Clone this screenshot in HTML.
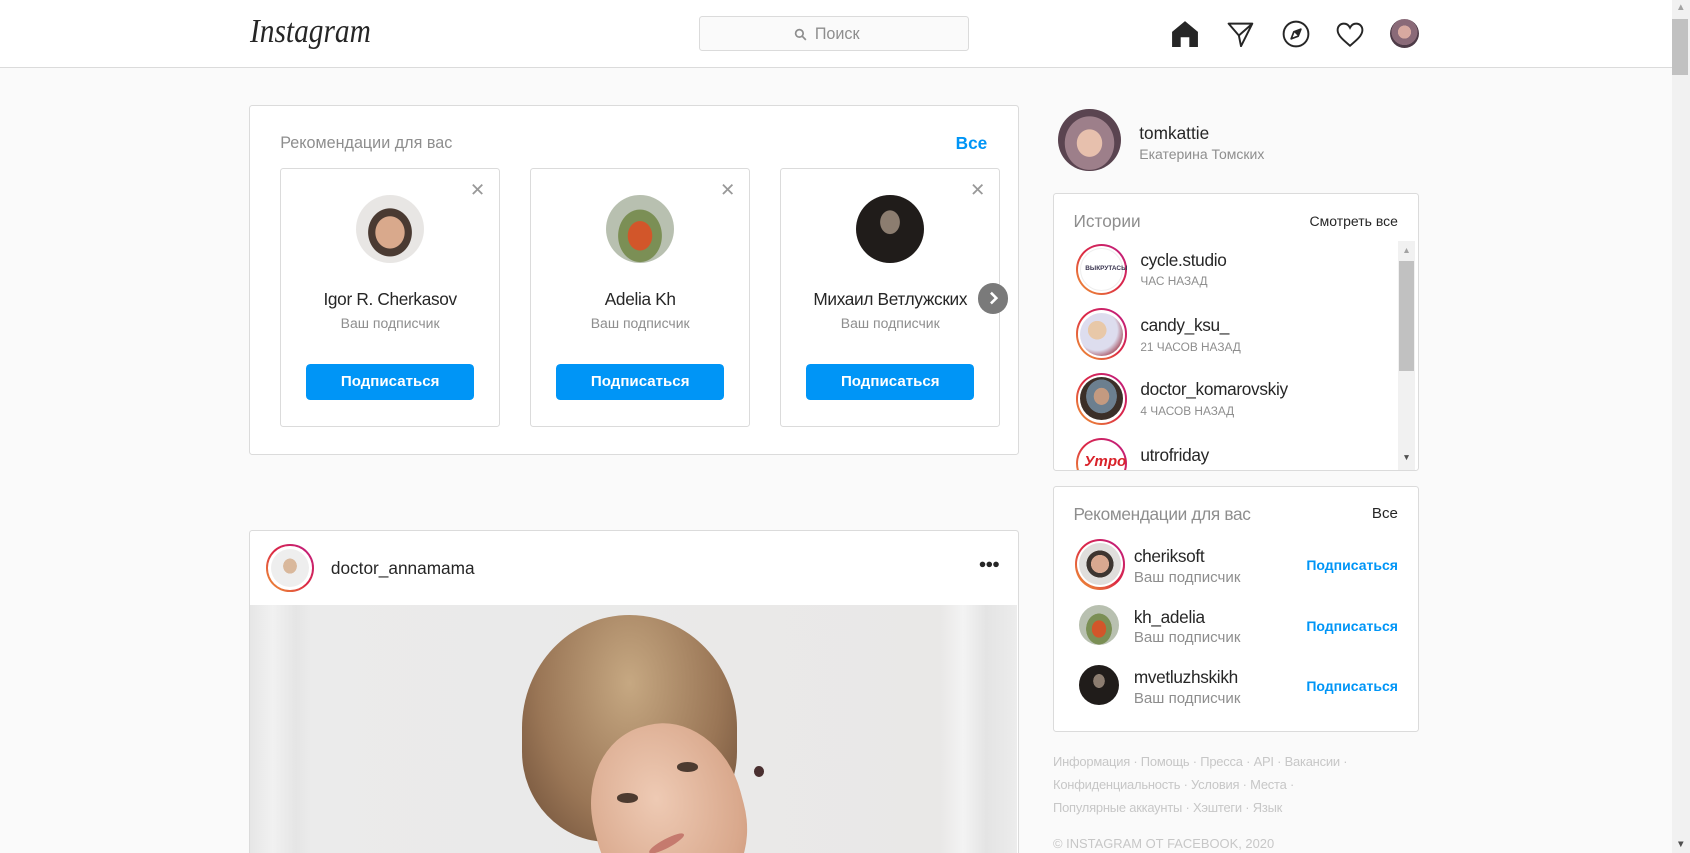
<!DOCTYPE html>
<html><head><meta charset="utf-8">
<style>
html,body{margin:0;padding:0;overflow:hidden}
body{width:1690px;height:853px;background:#fafafa;font-family:"Liberation Sans","DejaVu Sans",sans-serif;color:#262626}
#w{position:relative;width:1568px;height:791px;zoom:1.07781;overflow:hidden}
.a{position:absolute}
.box{position:absolute;background:#fff;border:1px solid #dbdbdb;border-radius:3px;box-sizing:border-box}
.av{position:absolute;border-radius:50%;overflow:hidden}
.ring{position:absolute;border-radius:50%;background:linear-gradient(45deg,#f09433,#e6683c,#dc2743,#cc2366,#bc1888)}
.ring>div{position:absolute;inset:2px;border-radius:50%;background:#fff}
.ring>div>div{position:absolute;inset:2px;border-radius:50%}
.btn{position:absolute;background:#0095f6;color:#fff;font-weight:bold;font-size:14px;text-align:center;line-height:33px;border-radius:4px;width:156px;height:33px}
.t{position:absolute;white-space:nowrap}
.r{position:absolute;white-space:nowrap;text-align:right}
.g{color:#8e8e8e}
</style></head><body><div id="w">
<!-- header -->
<div class="a" style="left:0;top:0;width:1551px;height:62px;background:#fff;border-bottom:1px solid #dbdbdb"></div>
<div class="t" style="left:232px;top:12px;font-family:'Liberation Serif',serif;font-style:italic;font-size:31px;color:#262626;transform:scaleX(0.88);transform-origin:left">Instagram</div>
<div class="a" style="left:649px;top:15px;width:250px;height:32px;box-sizing:border-box;border:1px solid #dbdbdb;border-radius:3px;background:#fafafa"></div>
<svg class="a" style="left:737px;top:26px" width="12" height="12" viewBox="0 0 12 12"><circle cx="5" cy="5" r="3.5" fill="none" stroke="#8e8e8e" stroke-width="1.6"/><path d="M7.5 7.5L11 11" stroke="#8e8e8e" stroke-width="1.6"/></svg>
<div class="t g" style="left:756px;top:23px;font-size:15px">Поиск</div>
<svg class="a" style="left:1086px;top:19px" width="26" height="26" viewBox="0 0 26 26"><path d="M1 11L13 1l12 10v14h-8v-9h-8v9H1z" fill="#262626"/></svg>
<svg class="a" style="left:1138px;top:20px" width="26" height="24" viewBox="0 0 26 24"><path d="M1.5 1.5h22L13 22.5l-2-10z M11 12.5L23.5 1.5" fill="none" stroke="#262626" stroke-width="1.8" stroke-linejoin="round"/></svg>
<svg class="a" style="left:1189px;top:19px" width="26" height="26" viewBox="0 0 26 26"><circle cx="13" cy="13" r="11.5" fill="none" stroke="#262626" stroke-width="1.8"/><path d="M17.5 8.5L11 11 8.5 17.5 15 15z" fill="none" stroke="#262626" stroke-width="1.6" stroke-linejoin="round"/><path d="M11 11L15 15 17.5 8.5z" fill="#262626"/></svg>
<svg class="a" style="left:1240px;top:20px" width="26" height="24" viewBox="0 0 26 24"><path d="M13 22C7 17 1.5 12.5 1.5 7.5 1.5 4 4 1.5 7.3 1.5 10 1.5 12 3.3 13 5.3 14 3.3 16 1.5 18.7 1.5 22 1.5 24.5 4 24.5 7.5 24.5 12.5 19 17 13 22z" fill="none" stroke="#262626" stroke-width="1.8"/></svg>
<div class="av" style="left:1290px;top:18px;width:27px;height:27px;background:radial-gradient(circle at 50% 45%,#d8a9a0 0 30%,#8a6a78 31% 60%,#4d3b47 61%)"></div>
<!-- page scrollbar -->
<div class="a" style="left:1551px;top:0;width:17px;height:791px;background:#f1f1f1"></div>
<div class="a" style="left:1551px;top:18px;width:15px;height:52px;background:#c1c1c1"></div>
<div class="t" style="left:1555px;top:2px;font-size:9px;color:#a3a3a3">▲</div>
<div class="t" style="left:1555px;top:778px;font-size:9px;color:#505050">▼</div>

<!-- recommendations card -->
<div class="box" style="left:231px;top:97px;width:714px;height:325px"></div>
<div class="t g" style="left:260px;top:124px;font-size:15px">Рекомендации для вас</div>
<div class="r" style="left:816px;width:100px;top:123px;font-size:16px;color:#0095f6;font-weight:bold">Все</div>

<div class="box" style="left:260px;top:156px;width:204px;height:240px"></div>
<div class="box" style="left:492px;top:156px;width:204px;height:240px"></div>
<div class="box" style="left:724px;top:156px;width:204px;height:240px"></div>
<div class="t" style="left:436px;top:166px;font-size:17px;color:#999">✕</div>
<div class="t" style="left:668px;top:166px;font-size:17px;color:#999">✕</div>
<div class="t" style="left:900px;top:166px;font-size:17px;color:#999">✕</div>
<div class="av" style="left:330px;top:181px;width:63px;height:63px;background:radial-gradient(ellipse at 50% 55%,#d9a98c 0 30%,#4a3a32 31% 45%,#e8e6e4 46%)"></div>
<div class="av" style="left:562px;top:181px;width:63px;height:63px;background:radial-gradient(ellipse at 50% 60%,#d2562a 0 25%,#7b8f55 26% 45%,#b8c0b0 46%)"></div>
<div class="av" style="left:794px;top:181px;width:63px;height:63px;background:radial-gradient(ellipse at 50% 40%,#8c7d70 0 20%,#201c1a 21%)"></div>
<div class="t" style="left:260px;width:204px;text-align:center;top:268px;font-size:16px;letter-spacing:-0.3px">Igor R. Cherkasov</div>
<div class="t" style="left:492px;width:204px;text-align:center;top:268px;font-size:16px;letter-spacing:-0.3px">Adelia Kh</div>
<div class="t" style="left:724px;width:204px;text-align:center;top:268px;font-size:16px;letter-spacing:-0.3px">Михаил Ветлужских</div>
<div class="t g" style="left:260px;width:204px;text-align:center;top:292px;font-size:13px">Ваш подписчик</div>
<div class="t g" style="left:492px;width:204px;text-align:center;top:292px;font-size:13px">Ваш подписчик</div>
<div class="t g" style="left:724px;width:204px;text-align:center;top:292px;font-size:13px">Ваш подписчик</div>
<div class="btn" style="left:284px;top:338px">Подписаться</div>
<div class="btn" style="left:516px;top:338px">Подписаться</div>
<div class="btn" style="left:748px;top:338px">Подписаться</div>
<div class="av" style="left:907px;top:263px;width:28px;height:28px;background:#7a7a7a"></div>
<svg class="a" style="left:907px;top:263px" width="28" height="28" viewBox="0 0 28 28"><path d="M12 9l5 5-5 5" fill="none" stroke="#fff" stroke-width="2.4"/></svg>

<!-- post -->
<div class="box" style="left:231px;top:492px;width:714px;height:320px"></div>
<div class="ring" style="left:247px;top:505px;width:44px;height:44px"><div><div style="background:radial-gradient(ellipse at 50% 45%,#d9b89c 0 25%,#eee 26%)"></div></div></div>
<div class="t" style="left:307px;top:518px;font-size:16px">doctor_annamama</div>
<div class="t" style="left:908px;top:516px;font-size:12px;font-weight:bold;letter-spacing:-1px">●●●</div>
<div class="a" style="left:232px;top:561px;width:712px;height:240px;background:linear-gradient(90deg,#e6e6e6 0,#f1f1f1 3%,#e5e5e5 6%,#ebebeb 8%,#e9e8e7 90%,#f3f3f3 93%,#e4e4e4 96%,#ececec 100%);overflow:hidden">
 <div class="a" style="left:252px;top:10px;width:200px;height:210px;border-radius:50% 50% 40% 40%;background:radial-gradient(ellipse at 50% 30%,#c6a882,#9a7656 60%,#6b4c36)"></div>
 <div class="a" style="left:318px;top:110px;width:140px;height:170px;border-radius:48% 48% 45% 45%;background:radial-gradient(ellipse at 45% 40%,#eecab4,#d9a88c 70%,#c48f72);transform:rotate(-15deg)"></div>
 <div class="a" style="left:340px;top:175px;width:20px;height:9px;border-radius:50%;background:#4d3b30"></div>
 <div class="a" style="left:396px;top:146px;width:20px;height:9px;border-radius:50%;background:#4d3b30"></div>
 <div class="a" style="left:368px;top:217px;width:36px;height:8px;border-radius:50%;background:#c57a6e;transform:rotate(-28deg)"></div>
 <div class="a" style="left:468px;top:150px;width:9px;height:10px;border-radius:50%;background:#4a3030"></div>
</div>

<!-- right column -->
<div class="av" style="left:982px;top:101px;width:58px;height:58px;background:radial-gradient(ellipse at 50% 55%,#e7c0ad 0 28%,#9d7f8a 29% 55%,#5a4450 56%)"></div>
<div class="t" style="left:1057px;top:114px;font-size:16px">tomkattie</div>
<div class="t g" style="left:1057px;top:135px;font-size:13px">Екатерина Томских</div>

<div class="box" style="left:977px;top:179px;width:340px;height:258px"></div>
<div class="t g" style="left:996px;top:196px;font-size:16px">Истории</div>
<div class="r" style="left:1147px;width:150px;top:198px;font-size:13px">Смотреть все</div>
<div class="a" style="left:978px;top:224px;width:338px;height:212px;overflow:hidden">
 <div class="a" style="left:319px;top:0;width:16px;height:212px;background:#f1f1f1"></div>
 <div class="a" style="left:320px;top:18px;width:14px;height:102px;background:#c1c1c1"></div>
 <div class="t" style="left:323px;top:3px;font-size:8px;color:#a3a3a3">▲</div>
 <div class="t" style="left:323px;top:195px;font-size:8px;color:#505050">▼</div>
 <div class="ring" style="left:20px;top:2px;width:48px;height:48px"><div><div style="background:#fff;border:1px solid #eee"><div class="t" style="left:4px;top:15px;font-size:6px;font-weight:bold;color:#3a3550">ВЫКРУТАСЫ</div></div></div></div>
 <div class="t" style="left:80px;top:8px;font-size:16px;letter-spacing:-0.3px">cycle.studio</div>
 <div class="t g" style="left:80px;top:30px;font-size:11px">ЧАС НАЗАД</div>
 <div class="ring" style="left:20px;top:62px;width:48px;height:48px"><div><div style="background:radial-gradient(ellipse at 40% 40%,#e8c8a8 0 25%,#dde 26% 55%,#a04050 80%)"></div></div></div>
 <div class="t" style="left:80px;top:68px;font-size:16px;letter-spacing:-0.3px">candy_ksu_</div>
 <div class="t g" style="left:80px;top:91px;font-size:11px">21 ЧАСОВ НАЗАД</div>
 <div class="ring" style="left:20px;top:122px;width:48px;height:48px"><div><div style="background:radial-gradient(ellipse at 50% 45%,#c49a80 0 25%,#6c7f8f 26% 50%,#3b2f28 51%)"></div></div></div>
 <div class="t" style="left:80px;top:128px;font-size:16px;letter-spacing:-0.3px">doctor_komarovskiy</div>
 <div class="t g" style="left:80px;top:151px;font-size:11px">4 ЧАСОВ НАЗАД</div>
 <div class="ring" style="left:20px;top:182px;width:48px;height:48px"><div><div style="background:#fff"><div class="t" style="left:4px;top:10px;font-size:14px;font-style:italic;font-weight:bold;color:#d9222a">Утро</div></div></div></div>
 <div class="t" style="left:80px;top:189px;font-size:16px;letter-spacing:-0.3px">utrofriday</div>
</div>

<div class="box" style="left:977px;top:451px;width:340px;height:228px"></div>
<div class="t g" style="left:996px;top:468px;font-size:16px;letter-spacing:-0.3px">Рекомендации для вас</div>
<div class="r" style="left:1197px;width:100px;top:469px;font-size:14px">Все</div>
<div class="ring" style="left:997px;top:500px;width:47px;height:47px"><div><div style="background:radial-gradient(ellipse at 50% 50%,#d8a890 0 30%,#3d3530 31% 45%,#e0dedc 46%)"></div></div></div>
<div class="av" style="left:1001px;top:561px;width:37px;height:37px;background:radial-gradient(ellipse at 50% 60%,#d2562a 0 25%,#7b8f55 26% 45%,#b8c0b0 46%)"></div>
<div class="av" style="left:1001px;top:617px;width:37px;height:37px;background:radial-gradient(ellipse at 50% 40%,#8c7d70 0 20%,#201c1a 21%)"></div>
<div class="t" style="left:1052px;top:507px;font-size:16px;letter-spacing:-0.3px">cheriksoft</div>
<div class="t g" style="left:1052px;top:528px;font-size:14px">Ваш подписчик</div>
<div class="t" style="left:1052px;top:563px;font-size:16px;letter-spacing:-0.3px">kh_adelia</div>
<div class="t g" style="left:1052px;top:584px;font-size:14px">Ваш подписчик</div>
<div class="t" style="left:1052px;top:619px;font-size:16px;letter-spacing:-0.3px">mvetluzhskikh</div>
<div class="t g" style="left:1052px;top:640px;font-size:14px">Ваш подписчик</div>
<div class="r" style="left:1177px;width:120px;top:517px;font-size:13px;font-weight:bold;color:#0095f6">Подписаться</div>
<div class="r" style="left:1177px;width:120px;top:573px;font-size:13px;font-weight:bold;color:#0095f6">Подписаться</div>
<div class="r" style="left:1177px;width:120px;top:629px;font-size:13px;font-weight:bold;color:#0095f6">Подписаться</div>

<div class="t" style="left:977px;top:697px;font-size:12px;color:#c7c7c7;line-height:21px;letter-spacing:-0.2px">Информация · Помощь · Пресса · API · Вакансии ·<br>Конфиденциальность · Условия · Места ·<br>Популярные аккаунты · Хэштеги · Язык</div>
<div class="t" style="left:977px;top:776px;font-size:12px;color:#c7c7c7">© INSTAGRAM ОТ FACEBOOK, 2020</div>
</div></body></html>
